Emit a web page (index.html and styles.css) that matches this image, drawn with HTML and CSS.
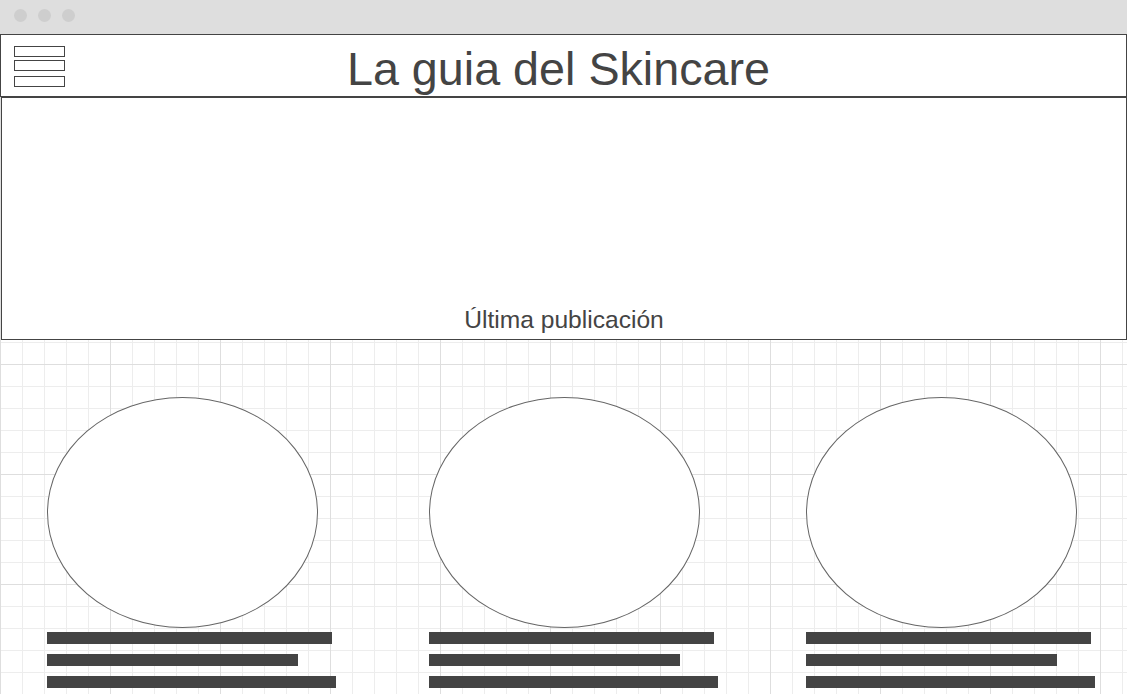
FILE: index.html
```html
<!DOCTYPE html>
<html lang="es">
  <head>
    <meta charset="UTF-8" />
    <meta name="viewport" content="width=device-width, initial-scale=1.0" />
    <title>La guia del Skincare</title>
    <link rel="stylesheet" href="styles.css">
  </head>
  <body>
    <div class="window_bar">
      <span class="dot"></span>
      <span class="dot"></span>
      <span class="dot"></span>
    </div>

    <div class="page">
      <header class="header">
        <div class="menu">
          <span class="menu_bar"></span>
          <span class="menu_bar"></span>
          <span class="menu_bar"></span>
        </div>
        <h1>La guia del Skincare</h1>
      </header>

      <section class="hero">
        <p>Última publicación</p>
      </section>

      <div class="cards">
        <div class="card">
          <div class="picture"></div>
          <div class="line line_a"></div>
          <div class="line line_b"></div>
          <div class="line line_c"></div>
        </div>
        <div class="card">
          <div class="picture"></div>
          <div class="line line_a"></div>
          <div class="line line_b"></div>
          <div class="line line_c"></div>
        </div>
        <div class="card">
          <div class="picture"></div>
          <div class="line line_a"></div>
          <div class="line line_b"></div>
          <div class="line line_c"></div>
        </div>
      </div>
    </div>
  </body>
</html>
```

FILE: styles.css
```css
* {
    margin: 0;
    padding: 0;
    box-sizing: border-box;
}

body {
    width: 1127px;
    height: 694px;
    overflow: hidden;
    background: #fff;
    font-family: "Liberation Sans", Arial, sans-serif;
    color: #444;
}

/* browser chrome on top */
.window_bar {
    height: 34px;
    background: #dedede;
    display: flex;
    align-items: center;
    gap: 11px;
    padding: 0 0 3px 14px;
}

.window_bar .dot {
    width: 13px;
    height: 13px;
    border-radius: 50%;
    background: #cecece;
}

/* sketch paper */
.page {
    height: 660px;
    background-color: #fff;
    background-image:
        linear-gradient(to right, #dedede 1px, transparent 1px),
        linear-gradient(to bottom, #dedede 1px, transparent 1px),
        linear-gradient(to right, #ededed 1px, transparent 1px),
        linear-gradient(to bottom, #ededed 1px, transparent 1px);
    background-size: 110px 110px, 110px 110px, 22px 22px, 22px 22px;
}

.header {
    height: 63px;
    background: white;
    border: 1px solid #444;
    display: grid;
    grid-template-columns: 51px 1fr 51px;
    padding: 0 13px;
}

.menu {
    padding-top: 11px;
}

.menu_bar {
    display: block;
    height: 11px;
    border: 1px solid #444;
    margin-bottom: 3px;
}

.menu_bar:nth-child(2) {
    margin-bottom: 5px;
}

.header h1 {
    font-size: 46.7px;
    font-weight: normal;
    line-height: 62px;
    padding: 3px 10px 0 0;
    text-align: center;
    white-space: nowrap;
}

.hero {
    height: 243px;
    margin-left: 1px;
    background: white;
    border: 1px solid #444;
    display: flex;
    flex-direction: column;
    justify-content: flex-end;
    align-items: center;
    padding-bottom: 5px;
}

.hero p {
    font-size: 24.6px;
}

.cards {
    display: grid;
    grid-template-columns: 382px 377px 321px;
    padding: 57px 0 0 47px;
}

.card .picture {
    width: 271px;
    height: 231px;
    border: 1px solid #666;
    border-radius: 50%;
    background: white;
    margin-bottom: 4px;
}

.card .line {
    height: 12px;
    background: #444;
    margin-bottom: 10px;
}

.line_a {
    width: 285px;
}

.line_b {
    width: 251px;
}

.line_c {
    width: 289px;
}
```
